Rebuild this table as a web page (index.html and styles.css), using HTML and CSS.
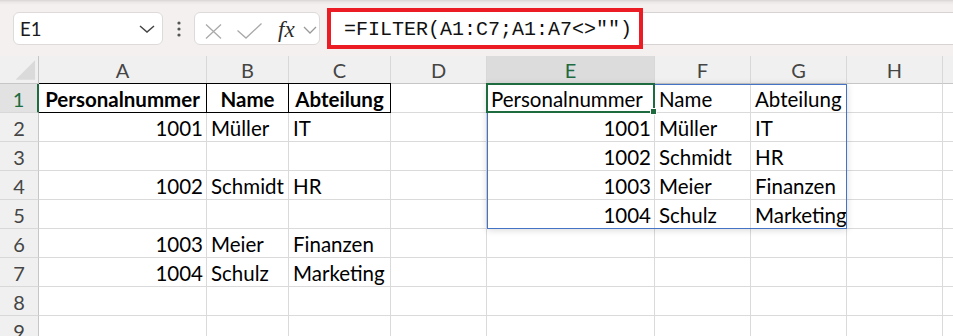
FILE: index.html
```html
<!DOCTYPE html>
<html lang="de">
<head>
<meta charset="utf-8">
<title>Excel FILTER</title>
<link rel="stylesheet" href="styles.css">
</head>
<body>
<div class="app">
  <div class="toolbar">
    <div class="namebox">
      <span class="nb-text">E1</span>
      <svg class="nb-chev" width="16" height="8" viewBox="0 0 16 8"><path d="M1 1 L8 7 L15 1" fill="none" stroke="#444" stroke-width="1.5"/></svg>
    </div>
    <div class="dots">
      <svg width="6" height="18" viewBox="0 0 6 18"><circle cx="3" cy="3" r="1.6" fill="#555"/><circle cx="3" cy="9" r="1.6" fill="#555"/><circle cx="3" cy="15" r="1.6" fill="#555"/></svg>
    </div>
    <div class="fxbox">
      <svg class="ic-x" width="17" height="15" viewBox="0 0 17 15"><path d="M1 0.5 L16 14.5 M16 0.5 L1 14.5" fill="none" stroke="#a9a9a9" stroke-width="1.3"/></svg>
      <svg class="ic-check" width="25" height="16" viewBox="0 0 25 16"><path d="M0.5 7.5 L9 15 L24.5 0.5" fill="none" stroke="#a9a9a9" stroke-width="1.3"/></svg>
      <span class="fx">fx</span>
      <svg class="ic-chev" width="14" height="8" viewBox="0 0 14 8"><path d="M1 1 L7 7 L13 1" fill="none" stroke="#999" stroke-width="1.3"/></svg>
    </div>
    <div class="formulabar">
      <div class="formula">=FILTER(A1:C7;A1:A7&lt;&gt;"")</div>
    </div>
  </div>

  <div class="sheet">
    <div class="ch corner"><svg width="39" height="28" viewBox="0 0 39 28"><polygon points="36,4 36,24 16,24" fill="#dadada"/></svg></div>
    <div class="ch">A</div><div class="ch">B</div><div class="ch">C</div><div class="ch">D</div>
    <div class="ch ch-sel">E</div><div class="ch">F</div><div class="ch">G</div><div class="ch">H</div><div class="ch"></div>

    <div class="rh rh-sel">1</div>
    <div class="c b hd">Personalnummer</div><div class="c b hd">Name</div><div class="c b hd">Abteilung</div><div class="c"></div>
    <div class="c">Personalnummer</div><div class="c">Name</div><div class="c">Abteilung</div><div class="c"></div><div class="c"></div>

    <div class="rh">2</div>
    <div class="c n">1001</div><div class="c">Müller</div><div class="c">IT</div><div class="c"></div>
    <div class="c n">1001</div><div class="c">Müller</div><div class="c">IT</div><div class="c"></div><div class="c"></div>

    <div class="rh">3</div>
    <div class="c"></div><div class="c"></div><div class="c"></div><div class="c"></div>
    <div class="c n">1002</div><div class="c">Schmidt</div><div class="c">HR</div><div class="c"></div><div class="c"></div>

    <div class="rh">4</div>
    <div class="c n">1002</div><div class="c">Schmidt</div><div class="c">HR</div><div class="c"></div>
    <div class="c n">1003</div><div class="c">Meier</div><div class="c">Finanzen</div><div class="c"></div><div class="c"></div>

    <div class="rh">5</div>
    <div class="c"></div><div class="c"></div><div class="c"></div><div class="c"></div>
    <div class="c n">1004</div><div class="c">Schulz</div><div class="c">Marketing</div><div class="c"></div><div class="c"></div>

    <div class="rh">6</div>
    <div class="c n">1003</div><div class="c">Meier</div><div class="c">Finanzen</div><div class="c"></div>
    <div class="c"></div><div class="c"></div><div class="c"></div><div class="c"></div><div class="c"></div>

    <div class="rh">7</div>
    <div class="c n">1004</div><div class="c">Schulz</div><div class="c">Marketing</div><div class="c"></div>
    <div class="c"></div><div class="c"></div><div class="c"></div><div class="c"></div><div class="c"></div>

    <div class="rh">8</div>
    <div class="c"></div><div class="c"></div><div class="c"></div><div class="c"></div>
    <div class="c"></div><div class="c"></div><div class="c"></div><div class="c"></div><div class="c"></div>

    <div class="rh">9</div>
    <div class="c"></div><div class="c"></div><div class="c"></div><div class="c"></div>
    <div class="c"></div><div class="c"></div><div class="c"></div><div class="c"></div><div class="c"></div>

    <div class="spill"></div>
    <div class="sel"><div class="handle"></div></div>
  </div>
</div>
</body>
</html>
```
FILE: styles.css
```css
* { box-sizing: border-box; }
html, body { margin: 0; padding: 0; }
body { width: 953px; height: 336px; overflow: hidden; background: #fff; }

.app {
  width: 953px;
  height: 336px;
  overflow: hidden;
  display: flex;
  flex-direction: column;
  font-family: Lato, "Liberation Sans", sans-serif;
}

/* ---------- toolbar ---------- */
.toolbar {
  height: 56px;
  flex: 0 0 56px;
  display: flex;
  align-items: flex-start;
  padding-top: 12px;
  background: linear-gradient(#d9d5d4 0, #ebe7e6 2px, #f4f0ef 5px, #f4f0ef 100%);
}

.namebox {
  margin-left: 13px;
  width: 150px;
  height: 33px;
  background: #fff;
  border: 1px solid #dedada;
  border-radius: 6px;
  display: flex;
  align-items: center;
  justify-content: space-between;
  padding: 0 7px 0 6px;
}
.nb-text { font-size: 18.5px; color: #1a1a1a; }
.nb-chev { margin-top: 1px; }

.dots {
  width: 31px;
  height: 33px;
  display: flex;
  align-items: center;
  justify-content: center;
}

.fxbox {
  width: 126px;
  height: 33px;
  background: #fff;
  border: 1px solid #dedada;
  border-radius: 6px;
  display: flex;
  align-items: center;
  padding-left: 10px;
}
.ic-x { margin-top: 5px; }
.ic-check { margin-left: 15px; margin-top: 5px; }
.fx {
  margin-left: 16px;
  font-family: "Liberation Serif", "DejaVu Serif", serif;
  font-style: italic;
  font-size: 23px;
  color: #2b2b2b;
  line-height: 1;
  margin-top: 2px;
}
.ic-chev { margin-left: 8px; margin-top: 2px; }

.formulabar {
  flex: 1;
  margin-left: 7px;
  height: 33px;
  background: #fff;
  border-top: 1px solid #d6d3d2;
  border-bottom: 1px solid #d6d3d2;
  display: flex;
}
.formula {
  width: 316px;
  height: 41px;
  margin-top: -5px;
  border: 4px solid #ec1c24;
  background: #fff;
  padding: 2px 0 0 13px;
  font-family: "Liberation Mono", "DejaVu Sans Mono", monospace;
  font-size: 20px;
  line-height: 31px;
  color: #111;
  white-space: nowrap;
}

/* ---------- sheet ---------- */
.sheet {
  position: relative;
  display: grid;
  grid-template-columns: 39px 168px 82px 102px 96px 168px 96px 96px 96px 96px;
  grid-template-rows: 28px repeat(9, 29px);
  background: #fff;
}

.ch {
  background: #f0f0f0;
  border-right: 1px solid #d8d8d8;
  border-bottom: 1px solid #c6c6c6;
  display: flex;
  align-items: center;
  justify-content: center;
  font-size: 20px;
  color: #454545;
  padding-top: 1px;
}
.ch.corner { padding: 0; border-right: 1px solid #c6c6c6; }
.ch-sel { background: #dcdcdc; color: #1d6b3f; }

.rh {
  background: #f0f0f0;
  border-right: 1px solid #c6c6c6;
  border-bottom: 1px solid #d8d8d8;
  display: flex;
  align-items: flex-end;
  justify-content: center;
  font-size: 20px;
  line-height: 24px;
  padding-bottom: 1px;
  color: #454545;
}
.rh-sel { background: #e2e2e2; color: #1d6b3f; border-right: 2px solid #1d6b3f; }

.c {
  border-right: 1px solid #dadada;
  border-bottom: 1px solid #dadada;
  display: flex;
  align-items: flex-end;
  padding: 0 3px 1px 4px;
  font-size: 20.5px;
  line-height: 24px;
  color: #000;
  white-space: nowrap;
  overflow: hidden;
}
.c.n { justify-content: flex-end; }
.c.hd { justify-content: center; font-weight: bold; padding: 0 0 1px 0; overflow: visible; }
.c.b {
  border-right-color: #000;
  border-bottom-color: #000;
  box-shadow: 0 -1px 0 #000;
}

.spill {
  position: absolute;
  grid-column: 6 / 9;
  grid-row: 2 / 7;
  top: 0; left: 0; right: 0; bottom: 0;
  border: 1px solid #4472c4;
  box-shadow: 0 1px 7px rgba(0,0,0,0.16);
  pointer-events: none;
}
.sel {
  position: absolute;
  grid-column: 6 / 7;
  grid-row: 2 / 3;
  top: -1px; left: -1px; right: 0; bottom: 0;
  border: 2px solid #1d6b3f;
  pointer-events: none;
}
.handle {
  position: absolute;
  right: -4px;
  bottom: -4px;
  width: 7px;
  height: 7px;
  background: #1d6b3f;
  border: 1px solid #fff;
}
```
